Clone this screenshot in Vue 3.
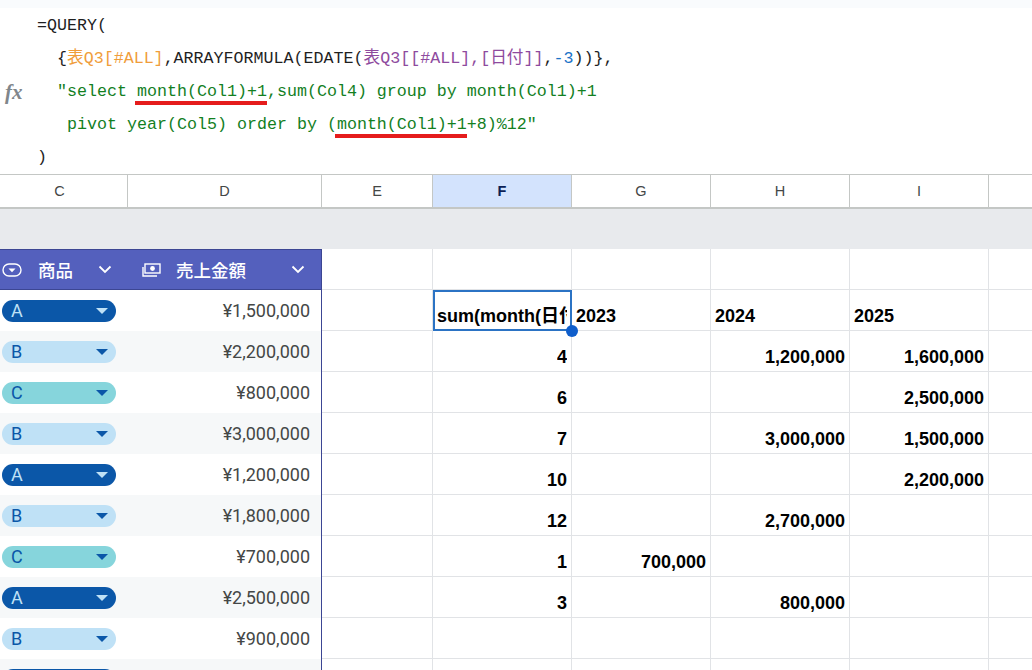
<script setup>
const cols = [
  { l: 'C', w: 128 }, { l: 'D', w: 194 }, { l: 'E', w: 111 }, { l: 'F', w: 139, active: true },
  { l: 'G', w: 139 }, { l: 'H', w: 139 }, { l: 'I', w: 139 }, { l: '', w: 43 }
]
const rows = [
  { chip: 'A', amount: '¥1,500,000', f: 'sum(month(日付', g: '2023', h: '2024', i: '2025', head: true },
  { chip: 'B', amount: '¥2,200,000', f: '4', h: '1,200,000', i: '1,600,000', alt: true },
  { chip: 'C', amount: '¥800,000', f: '6', i: '2,500,000' },
  { chip: 'B', amount: '¥3,000,000', f: '7', h: '3,000,000', i: '1,500,000', alt: true },
  { chip: 'A', amount: '¥1,200,000', f: '10', i: '2,200,000' },
  { chip: 'B', amount: '¥1,800,000', f: '12', h: '2,700,000', alt: true },
  { chip: 'C', amount: '¥700,000', f: '1', g: '700,000' },
  { chip: 'A', amount: '¥2,500,000', f: '3', h: '800,000', alt: true },
  { chip: 'B', amount: '¥900,000' },
  { chip: 'A', amount: '', alt: true }
]
</script>

<template>
  <div class="page">
    <div class="topstrip"></div>
    <div class="formula">
      <div class="fx">fx</div>
      <div class="code">
        <div class="ln">=QUERY(</div>
        <div class="ln i1">{<span class="orange">表Q3[#ALL]</span>,ARRAYFORMULA(EDATE(<span class="purple">表Q3[[#ALL],[日付]]</span>,<span class="blue">-3</span>))},</div>
        <div class="ln i1 green">"select <span class="mark">month(Col1)+1</span>,sum(Col4) group by month(Col1)+1</div>
        <div class="ln i2 green">pivot year(Col5) order by (<span class="mark">month(Col1)+1</span>+8)%12"</div>
        <div class="ln">)</div>
      </div>
    </div>

    <div class="colhead">
      <div v-for="c in cols" :key="c.l" class="hcell" :class="{ active: c.active, first: c.l === 'C' }" :style="{ width: c.w + 'px' }">{{ c.l }}</div>
    </div>

    <div class="band"></div>

    <div class="row top">
      <div class="thead c">
        <svg class="ico" width="20" height="14" viewBox="0 0 20 14"><rect x="1" y="1" width="18" height="12" rx="6" fill="none" stroke="#fff" stroke-width="1.4"/><path d="M6.5 5.6h7L10 9.2z" fill="#fff"/></svg>
        <span class="ttl">商品</span>
        <svg class="chev" width="14" height="9" viewBox="0 0 14 9"><path d="M1.5 1.5 7 7l5.5-5.5" fill="none" stroke="#fff" stroke-width="1.8"/></svg>
      </div>
      <div class="thead d">
        <svg class="ico" width="19" height="14" viewBox="0 0 19 14"><rect x="3" y="1" width="15" height="9" fill="none" stroke="#fff" stroke-width="1.4"/><path d="M1 4v9h14" fill="none" stroke="#fff" stroke-width="1.4"/><circle cx="10.5" cy="5.5" r="2.4" fill="#fff"/></svg>
        <span class="ttl">売上金額</span>
        <svg class="chev" width="14" height="9" viewBox="0 0 14 9"><path d="M1.5 1.5 7 7l5.5-5.5" fill="none" stroke="#fff" stroke-width="1.8"/></svg>
      </div>
      <div class="g e"></div><div class="g f"></div><div class="g n"></div><div class="g n"></div><div class="g n"></div><div class="g last"></div>
    </div>

    <div v-for="(r, idx) in rows" :key="idx" class="row">
      <div class="tc c" :class="{ alt: r.alt }">
        <span class="chip" :class="'chip' + r.chip">
          <span>{{ r.chip }}</span><i class="tri"></i>
        </span>
      </div>
      <div class="tc d" :class="{ alt: r.alt }">{{ r.amount }}</div>
      <div class="g e"></div>
      <div class="g f val" :class="{ sel: r.head, left: r.head }">
        <span class="clip">{{ r.f }}</span>
        <i v-if="r.head" class="handle"></i>
      </div>
      <div class="g n val" :class="{ left: r.head }">{{ r.g }}</div>
      <div class="g n val" :class="{ left: r.head }">{{ r.h }}</div>
      <div class="g n val" :class="{ left: r.head }">{{ r.i }}</div>
      <div class="g last"></div>
    </div>
  </div>
</template>

<style>
html, body { margin: 0; background: #fff; overflow: hidden; }
</style>

<style scoped>
.page { width: 1032px; height: 670px; overflow: hidden; background: #fff; font-family: "Liberation Sans", Arial, sans-serif; }
.topstrip { height: 8px; background: #f9fbfd; }
.formula { height: 166px; position: relative; border-bottom: 1px solid #c4c7c5; box-sizing: content-box; }
.fx { position: absolute; left: 5px; top: 72px; font: italic 700 21px "Liberation Serif", serif; color: #80868b; }
.code { padding: 1px 0 0 37px; font: 16.67px/33px "Liberation Mono", "Noto Sans CJK JP", monospace; color: #1f1f1f; }
.ln { height: 33px; white-space: pre; }
.i1 { padding-left: 20px; }
.i2 { padding-left: 30px; }
.orange { color: #f09d3b; }
.purple { color: #8e4a9e; }
.blue { color: #1a73c8; }
.green { color: #13801f; }
.mark { position: relative; }
.mark::after { content: ""; position: absolute; left: -2px; right: 0; bottom: -4px; height: 4px; background: #e51c1c; }
.colhead { display: flex; height: 32px; border-bottom: 2px solid #c4c7c5; }
.hcell { box-sizing: border-box; border-right: 1px solid #c4c7c5; display: flex; align-items: center; justify-content: center; font-size: 14.5px; color: #444746; }
.hcell.first { padding-right: 8px; }
.hcell:last-child { border-right: 0; }
.hcell.active { background: #d3e3fd; color: #0b1f56; font-weight: 700; }
.band { height: 40px; background: #e8eaed; }
.row { display: flex; height: 41px; }
.row.top { height: 41px; }
.thead { box-sizing: border-box; height: 41px; background: #5460bd; border-top: 1px solid #3c4693; border-bottom: 1px solid #3c4693; display: flex; align-items: center; color: #fff; font: 500 17.5px "Noto Sans CJK JP", sans-serif; }
.thead.c { width: 128px; padding-left: 2px; }
.thead.d { width: 194px; padding-left: 14px; padding-right: 16px; border-right: 1px solid #3c4693; }
.ico { flex: none; }
.thead.c .ttl { margin-left: 16px; }
.thead.d .ttl { margin-left: 15px; }
.chev { margin-left: auto; flex: none; }
.thead.c .chev { margin-right: 16px; }
.tc { box-sizing: border-box; height: 41px; display: flex; align-items: center; background: #fff; }
.tc.alt { background: #f6f8f9; }
.tc.c { width: 128px; padding-left: 2px; }
.tc.d { width: 194px; justify-content: flex-end; padding-right: 11px; border-right: 1px solid #3c4693; font: 18px Roboto, sans-serif; color: #444746; }
.chip { box-sizing: border-box; width: 114px; height: 22px; border-radius: 11px; display: flex; align-items: center; justify-content: space-between; padding: 0 8px 0 9px; font: 18px Roboto, sans-serif; }
.chipA { background: #0b57a8; color: #bfe1f6; }
.chipB { background: #bfe1f6; color: #0b57a8; }
.chipC { background: #86d5dc; color: #0b57a8; }
.tri { width: 0; height: 0; border-left: 6px solid transparent; border-right: 6px solid transparent; border-top: 6px solid currentColor; }
.chipB .tri, .chipC .tri { border-top-color: #0b57a8; }
.g { box-sizing: border-box; height: 41px; border-right: 1px solid #e1e3e6; border-bottom: 1px solid #e1e3e6; position: relative; }
.e { width: 111px; }
.f, .n { width: 139px; }
.last { width: 43px; border-right: 0; }
.val { display: flex; align-items: flex-end; justify-content: flex-end; padding: 0 4px 2px; font-size: 18px; font-weight: 700; color: #000; line-height: 24px; }
.val.left { justify-content: flex-start; }
.clip { white-space: nowrap; overflow: hidden; font-family: "Liberation Sans", "Noto Sans CJK JP", sans-serif; }
.sel { outline: 2px solid #2b73c4; outline-offset: -2px; z-index: 2; overflow: visible; }
.handle { position: absolute; right: -7px; bottom: -7px; width: 12px; height: 12px; border-radius: 50%; background: #0f5ecb; }
</style>
